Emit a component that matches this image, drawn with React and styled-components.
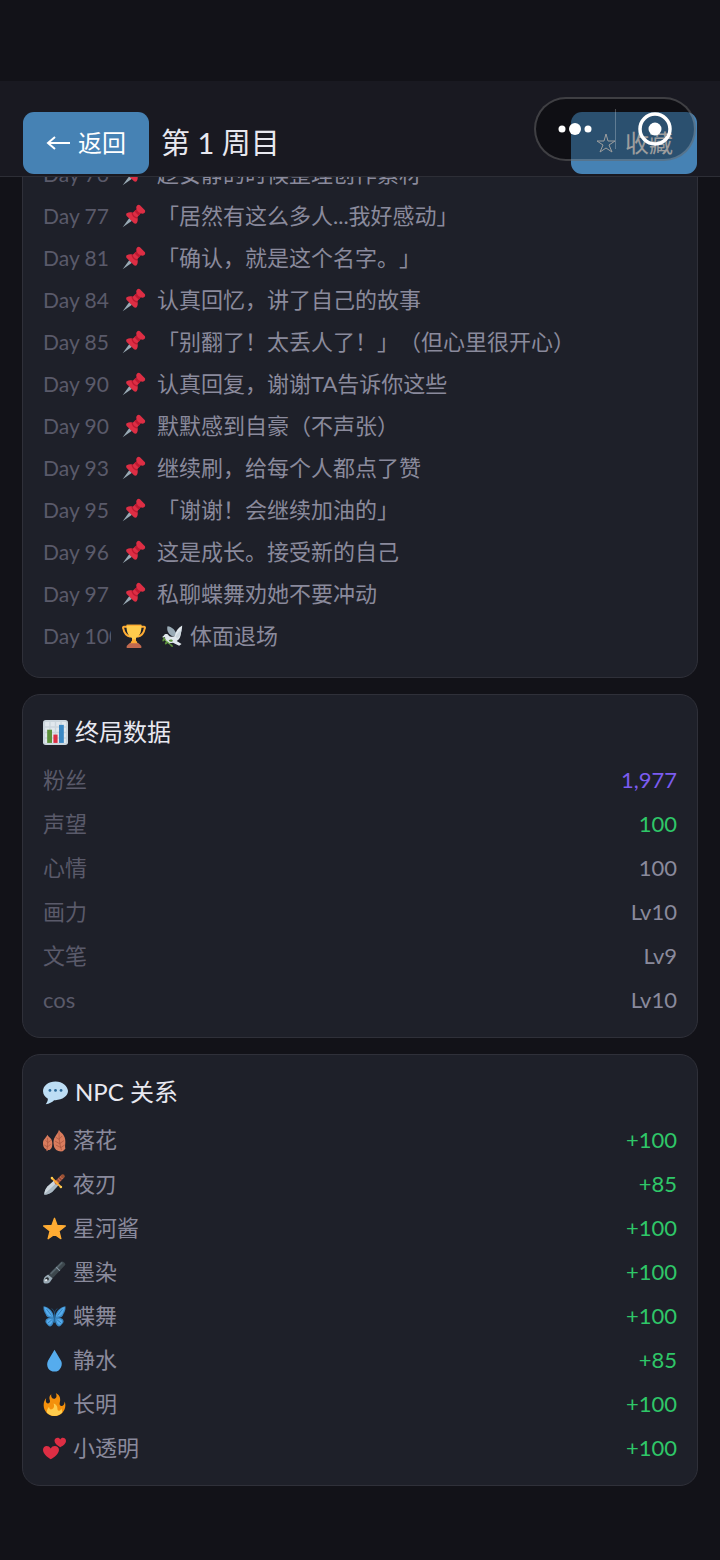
import React, { useState } from "react";
import styled, { createGlobalStyle } from "styled-components";

const timeline = [
  { day: 76, text: "趁安静的时候整理创作素材" },
  { day: 77, text: "「居然有这么多人...我好感动」" },
  { day: 81, text: "「确认，就是这个名字。」" },
  { day: 84, text: "认真回忆，讲了自己的故事" },
  { day: 85, text: "「别翻了！太丢人了！」（但心里很开心）" },
  { day: 90, text: "认真回复，谢谢TA告诉你这些" },
  { day: 90, text: "默默感到自豪（不声张）" },
  { day: 93, text: "继续刷，给每个人都点了赞" },
  { day: 95, text: "「谢谢！会继续加油的」" },
  { day: 96, text: "这是成长。接受新的自己" },
  { day: 97, text: "私聊蝶舞劝她不要冲动" },
  { day: 100, text: "体面退场", ending: true },
];

const stats = [
  { name: "粉丝", value: "1,977", color: "#7c5cf0" },
  { name: "声望", value: "100", color: "#2fc768" },
  { name: "心情", value: "100" },
  { name: "画力", value: "Lv10" },
  { name: "文笔", value: "Lv9" },
  { name: "cos", value: "Lv10" },
];

const npcs = [
  { icon: "leaves", name: "落花", value: "+100" },
  { icon: "dagger", name: "夜刃", value: "+85" },
  { icon: "star", name: "星河酱", value: "+100" },
  { icon: "brush", name: "墨染", value: "+100" },
  { icon: "butterfly", name: "蝶舞", value: "+100" },
  { icon: "drop", name: "静水", value: "+85" },
  { icon: "fire", name: "长明", value: "+100" },
  { icon: "hearts", name: "小透明", value: "+100" },
];

// every drawing uses a 36 x 36 box
const drawings = {
  pin: (
    <>
      <path fill="#99aab5" d="M1 35l10-14 4 4z" />
      <path fill="#dd2e44" d="M7 14c3-2 6-2 9-1l6-5c-1-2-1-4 1-6 1-1 3-1 4 0l7 7c1 1 1 3 0 4-2 2-4 2-6 1l-5 6c1 3 1 6-1 9-1 1-3 1-4 0L7 18c-1-1-1-3 0-4z" />
      <path fill="#be1931" d="M22 8c1 3 3 5 6 6l-2 3c-3-1-6-4-7-7zM16 13c1 4 3 6 7 7v2c-5-1-8-4-9-9z" />
    </>
  ),
  trophy: (
    <>
      <path fill="none" stroke="#ffac33" strokeWidth="3" d="M9 4H3c-1 0-2 1-1 3 1 6 4 11 11 12M27 4h6c1 0 2 1 1 3-1 6-4 11-11 12" />
      <path fill="#ffcc4d" d="M7 1h22c1 9-2 17-8 20v4l3 5H12l3-5v-4C9 18 6 10 7 1z" />
      <path fill="#ffac33" d="M7 1h22v2H7zM15 23h6v2l3 5H12l3-5z" />
      <path fill="#c1694f" d="M11 29h14l4 4v3H7v-3z" />
    </>
  ),
  dove: (
    <>
      <path fill="#99aab5" d="M18 19C11 16 7 9 9 2c8 1 14 7 15 16z" />
      <path fill="#e1e8ed" d="M3 17c2-3 6-3 8 0 3 3 6 3 10 1 1-7 5-13 12-17 0 5-1 8-2 12 0 6-3 11-7 13l8 5-4 3-10-5C9 31 5 26 5 20H0z" />
      <path fill="#ccd6dd" d="M22 19c2-5 5-8 10-11-1 7-3 11-7 14z" />
      <path fill="none" stroke="#77b255" strokeWidth="2" d="M2 20c3 5 7 9 12 12" />
      <path fill="#5c913b" d="M4 22c-3 0-4 3-3 5 3 0 4-2 3-5zM9 27c-4 0-5 3-4 5 3 0 5-2 4-5zM11 25c3-2 6-1 7 1-3 2-6 2-7-1zM13 31c0 3 2 5 5 5 0-3-2-5-5-5z" />
    </>
  ),
  chart: (
    <>
      <rect width="36" height="36" rx="4" fill="#ccd6dd" />
      <path fill="#e1e8ed" d="M3 3h6v6H3zM11 3h6v6h-6zM19 3h6v6h-6zM27 3h6v6h-6zM3 11h6v6H3zM11 11h6v6h-6zM19 11h6v6h-6zM27 11h6v6h-6zM3 19h6v6H3zM11 19h6v6h-6zM19 19h6v6h-6zM27 19h6v6h-6zM3 27h6v6H3zM11 27h6v6h-6zM19 27h6v6h-6zM27 27h6v6h-6z" />
      <path fill="#5c913b" d="M6 14h7v19H6z" />
      <path fill="#dd2e44" d="M15 21h6v12h-6z" />
      <path fill="#3b88c3" d="M23 7h7v26h-7z" />
    </>
  ),
  bubble: (
    <>
      <path fill="#bdddf4" d="M18 2C8 2 0 8 0 16c0 5 3 9 7 11 0 3-1 5-3 8 5-1 9-3 12-6h2c10 0 18-6 18-13S28 2 18 2z" />
      <circle cx="10" cy="15" r="2" fill="#2a6797" />
      <circle cx="18" cy="15" r="2" fill="#2a6797" />
      <circle cx="26" cy="15" r="2" fill="#2a6797" />
    </>
  ),
  leaves: (
    <>
      <path fill="#da7c5d" d="M25 1c1 3 4 4 6 7 3 4 4 8 4 12s-1 7 0 11l-4 4c-7 1-13-2-14-9-1-5-1-10 2-14 2-4 5-6 6-11z" />
      <path fill="#da7c5d" d="M7 9c1 3 4 4 6 7 2 4 2 8 1 12-1 3-3 5-6 5l-2 2-1-3c-4-2-5-6-5-10 0-6 5-8 7-13z" />
      <path fill="none" stroke="#a0513c" strokeWidth="1" d="M25 5c0 10 1 20 4 28M25 16l-5-3M25 16l5-5M26 23l-7-4M26 23l7-5M28 29l-8-4M28 29l6-4M7 14c1 7 0 13-1 19M8 21l-4-3M8 21l4-3M7 28l-5-3M7 28l5-4" />
    </>
  ),
  dagger: (
    <>
      <path fill="#8899a6" d="M2 34c0-5 2-10 5-13l10-9 7 7-9 10c-3 3-8 5-13 5z" />
      <path fill="#ccd6dd" d="M2 34c0-5 2-10 5-13l10-9 4 4z" />
      <path fill="#aab8c2" d="M2 34l19-18 3 3-9 10c-3 3-8 5-13 5z" />
      <path fill="none" stroke="#c1694f" strokeWidth="6" strokeLinecap="round" d="M21 15L30 6" />
      <path fill="none" stroke="#8a4633" strokeWidth="2" d="M22 10l4 4M25 7l4 4" />
      <path fill="none" stroke="#ffac33" strokeWidth="3" strokeLinecap="round" d="M15 9l12 12" />
      <circle cx="14" cy="8" r="2" fill="#ffcc4d" />
      <circle cx="28" cy="22" r="2" fill="#ffcc4d" />
      <circle cx="31" cy="5" r="3" fill="#9b5234" />
    </>
  ),
  star: (
    <path
      fill="#ffac33"
      stroke="#ffac33"
      strokeWidth="2"
      strokeLinejoin="round"
      d="M18 2l4 11 13 1-10 8 3 12-10-7-10 7 3-12-10-8 13-1z"
    />
  ),
  brush: (
    <>
      <path fill="#3d474d" d="M9 21L29 1c2-1 6 2 6 5L15 27z" />
      <path fill="#57646c" d="M11 19L29 1l2 2-18 18z" />
      <path fill="#8899a6" d="M20 10l1-1 6 6-1 1z" />
      <path fill="#99aab5" d="M8 21l7 6-4 6c-3 3-8 3-10 1-1-3 0-8 3-10z" />
      <path fill="#292f33" d="M4 27c2-2 4-2 5 0 1 2-1 5-4 5-2 0-3-3-1-5z" />
      <circle cx="5" cy="30" r="2" fill="#e1e8ed" />
    </>
  ),
  butterfly: (
    <>
      <path fill="#3b88c3" d="M17 20C17 11 9 3 1 2c-1 5 1 9 3 12 1 4 4 6 8 6-6 0-9 3-8 7 1 2 2 3 4 5 5 5 9-3 10-11 1 8 5 16 10 11 2-2 3-3 4-5 1-4-2-7-8-7 4 0 7-2 8-6 2-3 4-7 3-12-8 1-16 9-16 18z" />
      <path fill="#55acee" d="M2 3c7 2 12 9 14 15C9 18 6 15 5 12 4 9 2 7 2 3zM34 3c-7 2-12 9-14 15 7 0 10-3 11-6 1-3 3-5 3-9zM15 22c-6-1-10 1-9 5 1 5 8 7 9-5zM21 22c6-1 10 1 9 5-1 5-8 7-9-5z" />
      <path fill="none" stroke="#226699" strokeWidth="1" strokeLinecap="round" d="M18 14c0-4-2-7-4-8M18 14c0-4 2-7 4-8M6 7l7 9M30 7l-7 9M8 28l6-5M28 28l-6-5" />
      <path stroke="#226699" strokeWidth="2" strokeLinecap="round" d="M18 15v12" />
    </>
  ),
  drop: (
    <path
      fill="#55acee"
      d="M28 18L18 1 8 18c-2 4-2 8 0 12 3 5 10 7 16 4 5-4 7-11 4-16z"
    />
  ),
  fire: (
    <>
      <path fill="#f4900c" d="M35 19c0-2.062-.367-4.039-1.040-5.868-.46 5.389-3.333 8.157-6.335 6.868-2.812-1.208-.917-5.917-.777-8.164.236-3.809-.012-8.169-6.931-11.794 2.875 5.500.333 8.917-2.333 9.125-2.958.231-5.667-2.542-4.667-7.042-3.238 2.386-3.332 6.402-2.333 9 1.042 2.708-.042 4.958-2.583 5.208-2.840.28-4.418-3.041-2.963-8.333C2.520 10.965 1 14.805 1 19c0 9.389 7.611 17 17 17s17-7.611 17-17z" />
      <path fill="#ffcc4d" d="M28.394 24c.148 3.084-2.561 4.293-4.019 3.709-2.106-.843-1.541-2.291-2.083-5.291s-2.625-5.083-5.708-6c2.250 6.333-1.247 8.667-3.080 9.084-1.872.426-3.753-.001-3.968-4.007C7.352 23.668 6 26.676 6 30c0 .368.023.730.055 1.090C9.125 34.124 13.342 36 18 36s8.875-1.876 11.945-4.910c.032-.360.055-.722.055-1.090 0-2.187-.584-4.236-1.606-6z" />
    </>
  ),
  hearts: (
    <>
      <path fill="#dd2e44" d="M12 35C6 31 0 26 0 20c0-7 9-8 12-2 3-6 13-5 13 2 0 6-7 12-13 15z" />
      <path fill="#dd2e44" d="M27 16c-5-3-9-6-9-10 0-5 7-7 9-2 2-5 9-3 9 2 0 4-4 8-9 10z" />
    </>
  ),
};

const Emoji = ({ name, size = 24 }) => (
  <svg width={size} height={size} viewBox="0 0 36 36" aria-hidden="true">
    {drawings[name]}
  </svg>
);

const App = () => {
  const [saved, setSaved] = useState(false);

  return (
    <>
      <GlobalStyle />
      <Page>
        <StatusSpace />
        <Header>
          <HeaderButton type="button">
            <svg width="24" height="18" viewBox="0 0 24 18" fill="none" stroke="currentColor" strokeWidth="2" aria-hidden="true">
              <path d="M24 9H2M9 3L2 9l7 6" />
            </svg>
            返回
          </HeaderButton>
          <Title>第 1 周目</Title>
          <HeaderButton type="button" aria-pressed={saved} onClick={() => setSaved(!saved)}>
            <svg width="22" height="22" viewBox="0 0 22 22" fill={saved ? "currentColor" : "none"} stroke="currentColor" aria-hidden="true">
              <path d="M11 2l2 7h7l-6 4 3 7-6-4-6 4 3-7-6-4h7z" />
            </svg>
            收藏
          </HeaderButton>
          <Capsule>
            <CapsuleButton type="button" aria-label="更多">
              <svg width="36" height="16" viewBox="0 0 36 16" fill="#fff">
                <circle cx="5" cy="8" r="3.500" />
                <circle cx="18" cy="8" r="6" />
                <circle cx="31" cy="8" r="3.500" />
              </svg>
            </CapsuleButton>
            <Divider />
            <CapsuleButton type="button" aria-label="关闭">
              <svg width="34" height="34" viewBox="0 0 34 34">
                <circle cx="17" cy="17" r="15" fill="none" stroke="#fff" strokeWidth="3.500" />
                <circle cx="17" cy="17" r="6.500" fill="#fff" />
              </svg>
            </CapsuleButton>
          </Capsule>
        </Header>

        <Main>
          <Card>
            <Timeline>
              {timeline.map((item, i) => (
                <Event key={i}>
                  <Day>Day {item.day}</Day>
                  <Emoji name={item.ending ? "trophy" : "pin"} />
                  <EventText $ending={item.ending}>
                    {item.ending && <Emoji name="dove" size={22} />}
                    {item.text}
                  </EventText>
                </Event>
              ))}
            </Timeline>
          </Card>

          <Card>
            <CardTitle>
              <Emoji name="chart" size={25} />
              终局数据
            </CardTitle>
            <Rows>
              {stats.map((s) => (
                <Row key={s.name}>
                  <Name $dim>{s.name}</Name>
                  <Value $color={s.color}>{s.value}</Value>
                </Row>
              ))}
            </Rows>
          </Card>

          <Card>
            <CardTitle>
              <Emoji name="bubble" size={25} />
              NPC 关系
            </CardTitle>
            <Rows>
              {npcs.map((n) => (
                <Row key={n.name}>
                  <Name>
                    <Emoji name={n.icon} size={23} />
                    {n.name}
                  </Name>
                  <Value $color="#2fc768">{n.value}</Value>
                </Row>
              ))}
            </Rows>
          </Card>
        </Main>
      </Page>
    </>
  );
};

const GlobalStyle = createGlobalStyle`
  * {
    box-sizing: border-box;
  }

  body {
    margin: 0;
    background: #121218;
    color: #8a8a9c;
    font-family: Lato, "Noto Sans CJK SC", sans-serif;
    font-size: 22px;
    line-height: 34px;
    text-spacing-trim: space-all;
  }

  button {
    font: inherit;
    cursor: pointer;
  }

  svg {
    flex: none;
  }
`;

const Page = styled.div`
  min-height: 100vh;
`;

const StatusSpace = styled.div`
  height: 81px;
`;

const Header = styled.header`
  position: sticky;
  top: 0;
  z-index: 2;
  display: flex;
  align-items: flex-end;
  gap: 12px;
  height: 96px;
  padding: 0 23px 2px;
  background: #191921;
  border-bottom: 1px solid #2d2e36;
`;

const HeaderButton = styled.button`
  display: flex;
  align-items: center;
  justify-content: center;
  gap: 8px;
  width: 126px;
  height: 62px;
  padding: 0;
  border: 0;
  border-radius: 11px;
  background: #4682b4;
  color: #fff;
  font-size: 24px;
`;

const Title = styled.h1`
  flex: 1;
  margin: 0;
  color: #e8e8f0;
  font-size: 29px;
  font-weight: 400;
  line-height: 62px;
`;

// the host app's menu floats above the page's own header
const Capsule = styled.div`
  position: absolute;
  top: 16px;
  right: 24px;
  display: flex;
  align-items: center;
  width: 162px;
  height: 64px;
  border: 2px solid rgba(255, 255, 255, 0.2);
  border-radius: 32px;
  background: rgba(0, 0, 0, 0.38);
`;

const CapsuleButton = styled.button`
  display: flex;
  flex: 1;
  align-items: center;
  justify-content: center;
  height: 100%;
  padding: 0;
  border: 0;
  background: none;
`;

const Divider = styled.span`
  width: 1px;
  height: 40px;
  background: rgba(255, 255, 255, 0.25);
`;

const Main = styled.main`
  display: flex;
  flex-direction: column;
  gap: 16px;
  margin-top: -45px;
  padding: 0 22px 74px;
`;

const Card = styled.section`
  padding: 20px;
  border: 1px solid #2f3039;
  border-radius: 18px;
  background: #1e2029;
`;

const CardTitle = styled.h2`
  display: flex;
  align-items: center;
  gap: 7px;
  margin: 0 0 14px;
  color: #e8e8f0;
  font-size: 24px;
  font-weight: 400;
`;

const Timeline = styled.ol`
  margin: 0;
  padding: 0;
  list-style: none;
`;

const Event = styled.li`
  display: flex;
  align-items: center;
  gap: 11px;
  line-height: 42px;
`;

const Day = styled.span`
  flex: none;
  width: 68px;
  overflow: hidden;
  color: #5a5a6a;
  font-size: 21px;
  white-space: nowrap;
`;

const EventText = styled.span`
  display: flex;
  align-items: center;
  gap: 6px;
  padding-left: ${(p) => (p.$ending ? "5px" : "0")};
`;

const Rows = styled.ul`
  display: flex;
  flex-direction: column;
  gap: 10px;
  margin: 0;
  padding: 0;
  list-style: none;
`;

const Row = styled.li`
  display: flex;
  align-items: center;
  justify-content: space-between;
`;

const Name = styled.span`
  display: flex;
  align-items: center;
  gap: 7px;
  color: ${(p) => (p.$dim ? "#5a5a6a" : "#8a8a9c")};
`;

const Value = styled.span`
  color: ${(p) => p.$color || "#8a8a9c"};
`;

export default App;
